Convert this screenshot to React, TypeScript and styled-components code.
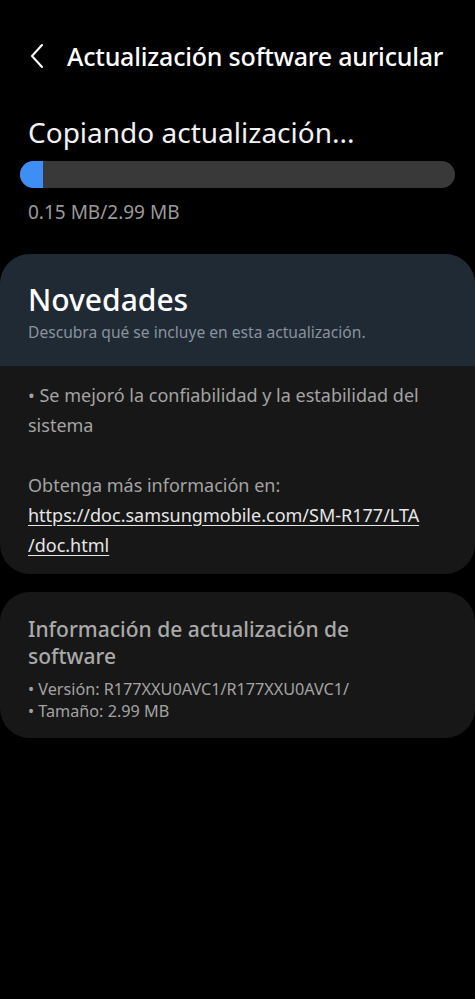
import styled, { createGlobalStyle } from "styled-components";

const GlobalStyle = createGlobalStyle`
  html, body {
    margin: 0;
    padding: 0;
    background: #000000;
  }
  body {
    font-family: "Noto Sans", "Roboto", sans-serif;
    -webkit-font-smoothing: antialiased;
  }
`;

const Screen = styled.div`
  width: 475px;
  min-height: 999px;
  background: #000000;
  color: #ffffff;
  display: flex;
  flex-direction: column;
`;

const Header = styled.header`
  height: 56px;
  margin-top: 28px;
  display: flex;
  align-items: center;
  padding-left: 29px;
  gap: 22px;
`;

const BackButton = styled.button`
  width: 16px;
  height: 28px;
  padding: 0;
  border: 0;
  background: none;
  display: flex;
  align-items: center;
  justify-content: center;
`;

const Title = styled.h1`
  margin: 0;
  font-size: 25px;
  font-weight: 500;
  letter-spacing: -0.2px;
  color: #ffffff;
`;

const Progress = styled.section`
  padding: 30px 20px 0 20px;
  display: flex;
  flex-direction: column;
`;

const Status = styled.div`
  font-size: 28px;
  font-weight: 400;
  color: #f2f2f2;
  padding-left: 8px;
  line-height: 36px;
`;

const Track = styled.div`
  margin-top: 11px;
  height: 27px;
  border-radius: 14px;
  background: #393939;
  overflow: hidden;
  display: flex;
`;

const Fill = styled.div`
  height: 100%;
  background: #3d8ef5;
`;

const Amount = styled.div`
  margin-top: 12px;
  padding-left: 8px;
  font-size: 19px;
  color: #9a9a9a;
  line-height: 24px;
`;

const Card = styled.section<{ $top: number }>`
  margin-top: ${(p) => p.$top}px;
  border-radius: 30px;
  background: #171717;
  overflow: hidden;
`;

const CardHead = styled.div`
  background: #1f2a35;
  padding: 26px 28px 23px 28px;
`;

const HeadTitle = styled.h2`
  margin: 0;
  font-size: 30px;
  font-weight: 500;
  color: #ffffff;
  line-height: 40px;
`;

const HeadSub = styled.p`
  margin: 1px 0 0 0;
  font-size: 15.6px;
  color: #8a929c;
  line-height: 22px;
`;

const CardBody = styled.div`
  padding: 14px 28px 14px 28px;
  font-size: 18px;
  line-height: 30px;
  color: #a3a3a3;
`;

const Para = styled.p<{ $gap?: number }>`
  margin: ${(p) => p.$gap ?? 0}px 0 0 0;
`;

const Link = styled.a`
  color: #e6e6e6;
  text-decoration: underline;
  text-underline-offset: 3px;
`;

const InfoBody = styled.div`
  padding: 24px 60px 16px 28px;
`;

const InfoTitle = styled.h3`
  margin: 0;
  font-size: 21px;
  font-weight: 500;
  line-height: 27px;
  color: #a9a9a9;
`;

const InfoList = styled.ul`
  list-style: none;
  margin: 8px 0 0 0;
  padding: 0;
  font-size: 16.2px;
  line-height: 22px;
  color: #a3a3a3;
`;

const InfoItem = styled.li`
  &::before {
    content: "• ";
  }
`;

const Chevron = () => (
  <svg width="14" height="26" viewBox="0 0 14 26" fill="none">
    <path
      d="M12 2 L2 13 L12 24"
      stroke="#ffffff"
      strokeWidth="2"
      strokeLinecap="round"
      strokeLinejoin="round"
    />
  </svg>
);

export default function App() {
  const copied = 0.15;
  const total = 2.99;
  const pct = Math.max((copied / total) * 100, 5.2);

  return (
    <>
      <GlobalStyle />
      <Screen>
        <Header>
          <BackButton aria-label="Atrás">
            <Chevron />
          </BackButton>
          <Title>Actualización software auricular</Title>
        </Header>

        <Progress>
          <Status>Copiando actualización...</Status>
          <Track>
            <Fill style={{ width: `${pct}%` }} />
          </Track>
          <Amount>0.15 MB/2.99 MB</Amount>
        </Progress>

        <Card $top={30}>
          <CardHead>
            <HeadTitle>Novedades</HeadTitle>
            <HeadSub>Descubra qué se incluye en esta actualización.</HeadSub>
          </CardHead>
          <CardBody>
            <Para>• Se mejoró la confiabilidad y la estabilidad del sistema</Para>
            <Para $gap={30}>
              Obtenga más información en:
              <br />
              <Link href="#">
                https://doc.samsungmobile.com/SM-R177/LTA<wbr />/doc.html
              </Link>
            </Para>
          </CardBody>
        </Card>

        <Card $top={18}>
          <InfoBody>
            <InfoTitle>Información de actualización de software</InfoTitle>
            <InfoList>
              <InfoItem>Versión: R177XXU0AVC1/R177XXU0AVC1/</InfoItem>
              <InfoItem>Tamaño: 2.99 MB</InfoItem>
            </InfoList>
          </InfoBody>
        </Card>
      </Screen>
    </>
  );
}
